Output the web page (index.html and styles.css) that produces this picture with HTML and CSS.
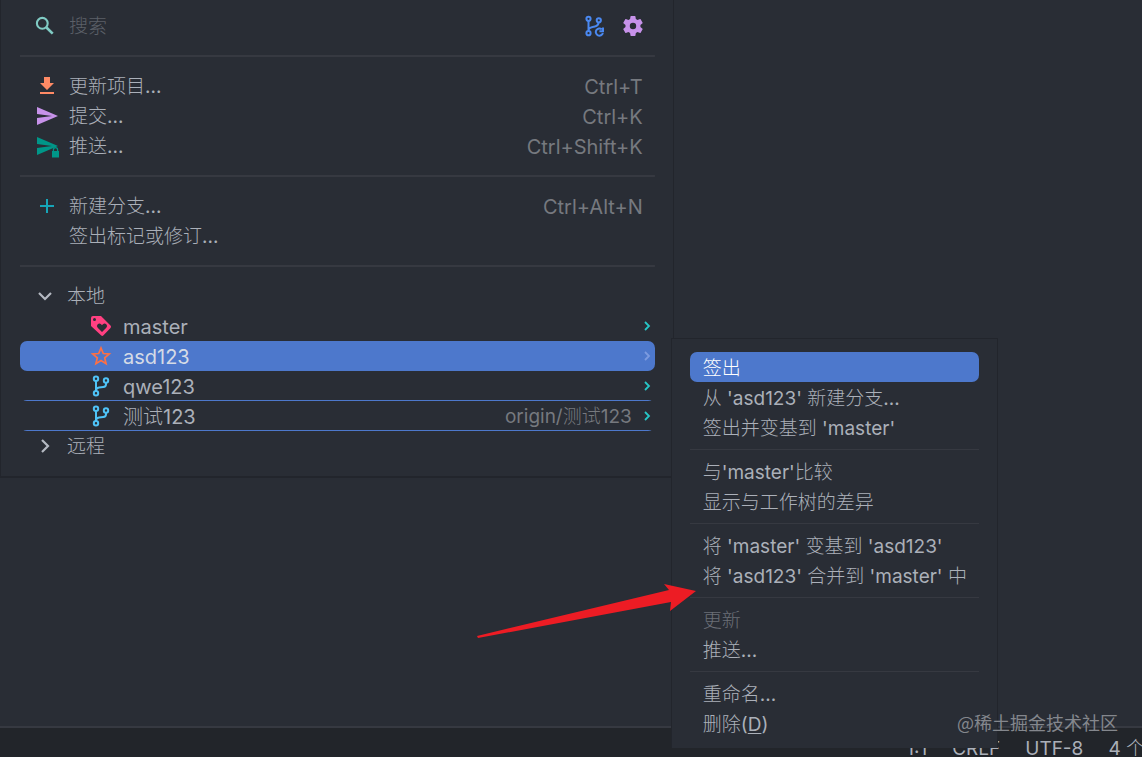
FILE: index.html
```html
<!DOCTYPE html>
<html lang="zh-CN">
<head>
<meta charset="utf-8">
<title>Git 分支</title>
<link rel="stylesheet" href="styles.css">
</head>
<body>
<svg class="defs" aria-hidden="true">
  <symbol id="branch" viewBox="0 0 20 22">
    <g fill="none" stroke="currentColor" stroke-width="2">
      <circle cx="5" cy="3.800" r="2.200"/><circle cx="5" cy="18.200" r="2.200"/><circle cx="15" cy="5.500" r="2.200"/>
      <path d="M5 6v10M15 7.700v1.500q0 2.600-2.800 2.900L8 12.600q-3 .4-3 3"/>
    </g>
  </symbol>
  <symbol id="next" viewBox="0 0 10 12"><path d="M3 2 7 6 3 10" fill="none" stroke="currentColor" stroke-width="1.800"/></symbol>
</svg>
<div class="window">
  <main class="editor"></main>
  <footer class="status"><span>1:1</span><span>CRLF</span><span>UTF-8</span><span class="indent">4 个</span></footer>

  <section class="popup" aria-label="分支">
    <div class="row search">
      <svg class="glass" viewBox="0 0 20 20"><circle cx="7.300" cy="7.300" r="5.400" fill="none" stroke="#80cbc4" stroke-width="2.100"/><path d="m11.500 11.500 6.200 6.200" stroke="#80cbc4" stroke-width="2.600"/></svg>
      <input type="text" placeholder="搜索" aria-label="搜索">
      <button class="tool" aria-label="获取">
        <svg viewBox="0 0 20 22" fill="none" stroke="#4a88f0" stroke-width="2"><circle cx="3.500" cy="3.800" r="2.100"/><circle cx="3.500" cy="18.200" r="2.100"/><circle cx="13.800" cy="5.300" r="2.100"/><path d="M3.500 6v10M13.500 7.500c0 3-2 3.800-4.500 4.200-3 .5-5.500.8-5.500 3.800M16.800 14.300A3.600 3.600 0 1 0 17.900 18M18 12.600v3.700h-3.600"/></svg>
      </button>
      <button class="tool" aria-label="设置">
        <svg viewBox="2 2 20 20"><path fill="#c792ea" d="M19.400 13c.04-.3.060-.640.060-1s-.020-.700-.060-1l2.100-1.650c.2-.15.240-.420.120-.640l-2-3.460a.5.5 0 0 0-.610-.220l-2.490 1a7.300 7.300 0 0 0-1.690-.980L14.450 2.400a.5.500 0 0 0-.490-.420h-4a.5.500 0 0 0-.490.420l-.380 2.650c-.610.250-1.170.590-1.690.980l-2.490-1a.5.500 0 0 0-.610.220l-2 3.460c-.130.220-.070.490.120.640L4.530 11c-.040.300-.070.650-.070 1s.030.700.070 1l-2.110 1.650c-.190.150-.240.420-.120.640l2 3.460c.120.220.390.300.610.220l2.490-1c.520.400 1.080.730 1.690.980l.380 2.650c.030.240.240.420.490.420h4c.250 0 .460-.180.490-.420l.380-2.650c.610-.250 1.170-.590 1.690-.980l2.490 1c.230.090.490 0 .610-.220l2-3.460a.5.500 0 0 0-.120-.640zM12 15.200a3.200 3.200 0 1 1 0-6.400 3.200 3.200 0 0 1 0 6.400z"/></svg>
      </button>
    </div>
    <hr>
    <button class="row"><svg class="icon" viewBox="0 0 24 24"><path fill="#ff8a65" d="M9 3h6v6h4l-7 7-7-7h4zM5 18h14v2H5z"/></svg><span class="label">更新项目...</span><kbd>Ctrl+T</kbd></button>
    <button class="row"><svg class="icon" viewBox="0 0 24 24"><path fill="#c792ea" d="M2 3l21 9-21 9v-7l15-2-15-2z"/></svg><span class="label">提交...</span><kbd>Ctrl+K</kbd></button>
    <button class="row"><svg class="icon" viewBox="0 0 24 24"><path fill="#009688" d="M2 3l21 9-21 9v-7l15-2-15-2z"/><path fill="#292d35" d="M16 15.500h8V24h-8z"/><path fill="#009688" d="M17 17h7v6.500h-7z"/><path fill="none" stroke="#009688" stroke-width="1.200" d="M18.400 17.500v-1.700a2.100 2.100 0 0 1 4.200 0v1.700"/></svg><span class="label">推送...</span><kbd>Ctrl+Shift+K</kbd></button>
    <hr>
    <button class="row"><svg class="icon" viewBox="0 0 24 24"><path d="M12 5v14M5 12h14" stroke="#16a5b8" stroke-width="2"/></svg><span class="label">新建分支...</span><kbd>Ctrl+Alt+N</kbd></button>
    <button class="row"><span class="icon"></span><span class="label">签出标记或修订...</span></button>
    <hr>
    <button class="row group"><svg class="icon" viewBox="0 0 24 24"><path d="m4 9 6 6 6-6" fill="none" stroke="#b4b9c2" stroke-width="2.200"/></svg><span class="label">本地</span></button>
    <button class="row branch"><svg class="icon" viewBox="0 0 24 24"><path fill="#ff4081" fill-rule="evenodd" d="M4 2h8l9.500 9.500q1.200 1.200 0 2.500l-7 7.300q-1.200 1.200-2.500 0L2 12V4q0-2 2-2zm1.500 2a1.500 1.500 0 1 0 0 3 1.500 1.500 0 0 0 0-3zM13 18l4.300-4.300a2.400 2.400 0 0 0-3.400-3.400l-.9.900-.9-.9a2.400 2.400 0 0 0-3.400 3.400z"/></svg><span class="label">master</span><svg class="next"><use href="#next"/></svg></button>
    <button class="row branch selected"><svg class="icon" viewBox="0 0 24 24"><path d="m12 4 2.300 5.500 6 .5-4.600 3.900 1.400 5.800-5.100-3.100-5.100 3.100 1.400-5.800L3.700 10l6-.5z" fill="none" stroke="#ff7043" stroke-width="1.700"/></svg><span class="label">asd123</span><svg class="next"><use href="#next"/></svg></button>
    <button class="row branch ruled"><svg class="icon fork"><use href="#branch"/></svg><span class="label">qwe123</span><svg class="next"><use href="#next"/></svg></button>
    <button class="row branch ruled"><svg class="icon fork"><use href="#branch"/></svg><span class="label">测试123</span><span class="label origin">origin/测试123</span><svg class="next"><use href="#next"/></svg></button>
    <button class="row group"><svg class="icon" viewBox="0 0 24 24"><path d="m7 6 6 6-6 6" fill="none" stroke="#b4b9c2" stroke-width="2.200"/></svg><span class="label">远程</span></button>
  </section>

  <nav class="menu" aria-label="分支操作">
    <button class="item active">签出</button>
    <button class="item">从 'asd123' 新建分支...</button>
    <button class="item">签出并变基到 'master'</button>
    <hr>
    <button class="item">与'master'比较</button>
    <button class="item">显示与工作树的差异</button>
    <hr>
    <button class="item">将 'master' 变基到 'asd123'</button>
    <button class="item">将 'asd123' 合并到 'master' 中</button>
    <hr>
    <button class="item" disabled>更新</button>
    <button class="item">推送...</button>
    <hr>
    <button class="item">重命名...</button>
    <button class="item">删除(<u>D</u>)</button>
  </nav>

  <svg class="arrow" viewBox="0 0 220 56" aria-hidden="true"><path fill="#ed1c24" d="M0 53 192 7l-5-6 32 7-26 20 1-9L1 55z"/></svg>
  <div class="watermark">@稀土掘金技术社区</div>
</div>
</body>
</html>
```

FILE: styles.css
```css
:root {
  --bg: #292d35;
  --edge: #22252c;
  --line: #363941;
  --text: #abb0b9;
  --muted: #76797f;
  --accent: #4d78cc;
  --row: 30px;
}

* { box-sizing: border-box; }

body {
  margin: 0;
  background: var(--bg);
  color: var(--text);
  font: 19px/30px Inter, "Noto Sans CJK SC Light", "Noto Sans CJK SC", sans-serif;
}

button, input {
  margin: 0;
  padding: 0;
  border: 0;
  background: none;
  color: inherit;
  font: inherit;
  text-align: left;
}

.defs { position: absolute; width: 0; height: 0; }

.window {
  position: relative;
  display: flex;
  flex-direction: column;
  height: 100vh;
  overflow: hidden;
}

.editor { flex: 1; }

.status {
  display: flex;
  justify-content: flex-end;
  gap: 25px;
  height: 31px;
  padding-top: 6px;
  overflow: hidden;
  border-top: 2px solid var(--line);
  background: #22252a;
  white-space: nowrap;
}

.indent { margin-right: -3px; }

.popup {
  position: absolute;
  top: 0;
  left: 0;
  width: 59%;
  padding: 11px 18px 15px 19px;
  border: solid var(--edge);
  border-width: 0 1px 2px;
  background: var(--bg);
}

.row {
  display: flex;
  align-items: center;
  width: 100%;
  height: var(--row);
  padding: 0 12px 0 15px;
  border-radius: 7px;
  white-space: nowrap;
}

.label, kbd, .search input { padding-top: 2px; }

.icon { flex: none; width: 24px; height: 24px; margin-right: 10px; }

.group .icon { margin-right: 8px; }

.glass { width: 20px; height: 20px; margin-right: 14px; }

.search input { flex: 1; min-width: 0; outline: 0; }

.search input::placeholder { color: #5c6068; opacity: 1; }

.tool { display: flex; margin-left: 18px; }

.tool svg { width: 20px; height: 22px; }

kbd { margin-left: auto; color: var(--muted); font: inherit; font-size: 20px; }

hr {
  height: var(--row);
  margin: 0;
  border: 0;
  background: linear-gradient(var(--line), var(--line)) center / 100% 2px no-repeat;
}

.branch { padding: 0 3px 0 69px; font-size: 20px; }

.fork { height: 22px; color: #4fc3f7; }

.next { width: 10px; height: 12px; margin-left: auto; color: #26c6c6; }

.selected { background: var(--accent); color: #d5dbe6; }

.selected .next { color: #7c9be0; }

.ruled {
  background: linear-gradient(var(--accent), var(--accent)) center bottom / calc(100% - 6px) 1px no-repeat;
}

.origin { margin-left: auto; color: var(--muted); font-size: 19px; }

.origin + .next { margin-left: 10px; }

.menu {
  position: absolute;
  top: 339px;
  left: calc(59% - 3px);
  padding: 13px 18px 10px;
  border: solid var(--edge);
  border-width: 0 1px;
  box-shadow: 0 -1px var(--edge);
  background: var(--bg);
}

.item {
  display: block;
  width: 100%;
  height: var(--row);
  padding: 2px 12px 0 13px;
  border-radius: 7px;
  white-space: pre;
}

.item:disabled { color: #6b6f77; }

.active { background: var(--accent); color: #fff; }

.menu hr { height: 14px; background-size: 100% 1px; }

.item u { text-underline-offset: 2px; }

.arrow {
  position: absolute;
  top: 583px;
  left: calc(59% - 197px);
  width: 220px;
  height: 56px;
}

.watermark {
  position: absolute;
  right: 24px;
  bottom: 20px;
  color: #84878d;
  font: 18px/30px "Noto Sans CJK SC", sans-serif;
}
```
